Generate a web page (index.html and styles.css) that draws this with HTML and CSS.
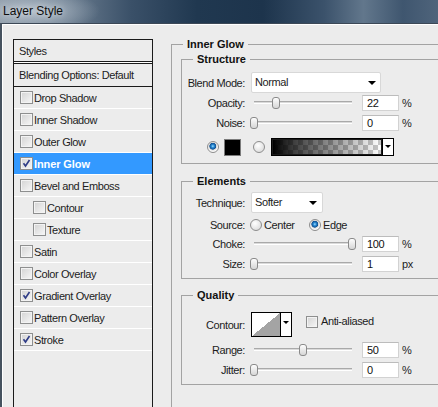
FILE: index.html
```html
<!DOCTYPE html>
<html lang="en">
<head>
<meta charset="UTF-8">
<title>Layer Style</title>
<link rel="stylesheet" href="styles.css">
</head>
<body>
<header class="titlebar">
<span class="title">Layer Style</span>
</header>

<div class="dialog">

<ul class="styles">
<li class="head">Styles</li>
<li class="head blending">Blending Options: Default</li>
<li><span class="cb"></span>Drop Shadow</li>
<li><span class="cb"></span>Inner Shadow</li>
<li><span class="cb"></span>Outer Glow</li>
<li class="selected"><span class="cb"><svg viewBox="0 0 11 11"><path d="M2.5 5.2l2 2.8 4-6" fill="none" stroke="#2f3c86" stroke-width="1.6"/></svg></span>Inner Glow</li>
<li><span class="cb"></span>Bevel and Emboss</li>
<li class="sub"><span class="cb"></span>Contour</li>
<li class="sub"><span class="cb"></span>Texture</li>
<li><span class="cb"></span>Satin</li>
<li><span class="cb"></span>Color Overlay</li>
<li><span class="cb"><svg viewBox="0 0 11 11"><path d="M2.5 5.2l2 2.8 4-6" fill="none" stroke="#2f3c86" stroke-width="1.6"/></svg></span>Gradient Overlay</li>
<li><span class="cb"></span>Pattern Overlay</li>
<li><span class="cb"><svg viewBox="0 0 11 11"><path d="M2.5 5.2l2 2.8 4-6" fill="none" stroke="#2f3c86" stroke-width="1.6"/></svg></span>Stroke</li>
</ul>

<section class="panel">
<fieldset class="group main">
<legend>Inner Glow</legend>

<!-- structure -->
<fieldset class="group structure">
<legend>Structure</legend>
<div class="row blend">
<span class="lbl">Blend Mode:</span>
<span class="select wide">Normal</span>
</div>
<div class="row opacity">
<span class="lbl">Opacity:</span>
<span class="slider"><span class="track"></span><span class="thumb" style="left:20.6px"></span></span>
<span class="num">22</span><span class="unit">%</span>
</div>
<div class="row noise">
<span class="lbl">Noise:</span>
<span class="slider"><span class="track"></span><span class="thumb" style="left:-1px"></span></span>
<span class="num">0</span><span class="unit">%</span>
</div>
<div class="row colors">
<span class="radio on"></span>
<span class="swatch"></span>
<span class="radio second"></span>
<span class="gradient"><span class="ramp"></span><span class="drop"></span></span>
</div>
</fieldset>

<!-- elements -->
<fieldset class="group elements">
<legend>Elements</legend>
<div class="row technique">
<span class="lbl">Technique:</span>
<span class="select short">Softer</span>
</div>
<div class="row source">
<span class="lbl tight">Source:</span>
<span class="choice"><span class="radio"></span>Center</span>
<span class="choice"><span class="radio on"></span>Edge</span>
</div>
<div class="row choke">
<span class="lbl">Choke:</span>
<span class="slider"><span class="track"></span><span class="thumb" style="left:97px"></span></span>
<span class="num">100</span><span class="unit">%</span>
</div>
<div class="row size">
<span class="lbl">Size:</span>
<span class="slider"><span class="track"></span><span class="thumb" style="left:-1px"></span></span>
<span class="num">1</span><span class="unit">px</span>
</div>
</fieldset>

<!-- quality -->
<fieldset class="group quality">
<legend>Quality</legend>
<div class="row contour">
<span class="lbl">Contour:</span>
<span class="curve"><span class="preview"></span><span class="drop"></span></span>
<span class="cb small"></span><span class="cb-text">Anti-aliased</span>
</div>
<div class="row range">
<span class="lbl">Range:</span>
<span class="slider"><span class="track"></span><span class="thumb" style="left:48px"></span></span>
<span class="num">50</span><span class="unit">%</span>
</div>
<div class="row jitter">
<span class="lbl">Jitter:</span>
<span class="slider"><span class="track"></span><span class="thumb" style="left:-1px"></span></span>
<span class="num">0</span><span class="unit">%</span>
</div>
</fieldset>

</fieldset>
</section>

</div>
</body>
</html>
```

FILE: styles.css
```css
  body{
	margin: 0;
	overflow: hidden;
	background-color: #ececec;
	color: #1c1c1c;
	font-family: "Liberation Sans", Arial, sans-serif;
	font-size: 11px;
	letter-spacing: -0.4px;
  }

  /* window caption */
  .titlebar{
	height: 23px;
	background:
		radial-gradient(ellipse 70px 22px at 30px 11px, rgba(190,200,210,.85), rgba(190,200,210,0)),
		linear-gradient(to right, #8593a1 0%, #6f8193 14%, #3a5068 30%, #203850 45%, #1d344c 60%, #3b526b 74%, #62778c 83%, #3f566f 92%, #4f647b 100%);
  }
  .title{
	display: inline-block;
	padding: 3px 0 0 3px;
	font-size: 12px;
	line-height: 16px;
	letter-spacing: 0;
	color: #0e0e0e;
	text-shadow: 0 0 6px rgba(255,255,255,.7);
  }

  .dialog{
	display: flex;
	align-items: flex-start;
	box-sizing: border-box;
	height: 384px;
	padding: 14px 0 0 11px;
	border-top: 1px solid #3c4856;
	border-left: 2px solid #46525f;
	box-shadow: inset 1px 1px 0 #fff;
  }

  /* styles list on the left */
  .styles{
	flex: none;
	box-sizing: border-box;
	width: 140px;
	height: 380px;
	margin: 1px 0 0;
	padding: 0;
	list-style: none;
	border: 1px solid #1b1b1b;
  }
  .styles li{
	display: flex;
	align-items: center;
	box-sizing: border-box;
	height: 22px;
	padding-left: 6px;
	border-bottom: 1px solid #fff;
  }
  .styles .head{
	padding-left: 5px;
	border-bottom-color: #1b1b1b;
  }
  .styles .blending{
	height: 24px;
	margin-top: 1px;
	border-top: 1px solid #1b1b1b;
	box-shadow: 0 -1px 0 #fff;
  }
  .styles .sub{
	padding-left: 19px;
  }
  .styles .selected{
	background-color: #3399ff;
	color: #fff;
	font-weight: bold;
	letter-spacing: -0.1px;
  }

  .cb{
	display: inline-flex;
	flex: none;
	box-sizing: border-box;
	width: 13px;
	height: 13px;
	margin-right: 1px;
	border: 1px solid #8e8f8f;
	background: linear-gradient(135deg, #d3d3d3, #f7f7f7);
	box-shadow: inset 0 0 0 1px #f3f3f3;
  }
  .cb svg{
	width: 11px;
	height: 11px;
  }
  .cb.small{
	width: 12px;
	height: 12px;
	margin: 4px 3px 0 14px;
	align-self: flex-start;
  }

  /* right side groups */
  .panel{
	flex: none;
	width: 330px;
	margin-left: 18px;
  }
  .group{
	min-width: 0;
	margin: 0;
	padding: 0;
	border: 1px solid #a3a3a3;
  }
  .group > legend{
	margin-left: 11px;
	padding: 0 4px;
	font-weight: bold;
	line-height: 12px;
	letter-spacing: 0;
	color: #111;
  }
  .main{
	height: 420px;
	padding: 3px 0 0 9px;
  }
  .main > legend{
	margin-left: 2px;
  }
  .structure{
	padding: 7px 0 7px;
  }
  .elements{
	margin-top: 11px;
	padding: 5px 0 6px;
  }
  .quality{
	margin-top: 10px;
	padding: 11px 0 6px;
  }

  .row{
	display: flex;
	align-items: center;
	height: 16px;
  }
  .lbl{
	flex: none;
	width: 63px;
	margin-right: 6px;
	text-align: right;
  }
  .lbl.tight{
	margin-right: 5px;
  }

  .blend{ height: 21px; margin-bottom: 2px; }
  .opacity{ margin-bottom: 4px; }
  .noise{ margin-bottom: 7px; }
  .colors{ height: 18px; padding-left: 25px; }

  .technique{ height: 21px; margin-bottom: 6px; }
  .source{ height: 12px; margin-bottom: 5px; }
  .choke{ margin-bottom: 4px; }

  .contour{ height: 25px; margin-bottom: 5px; }
  .range{ margin-bottom: 4px; }

  .select{
	position: relative;
	box-sizing: border-box;
	height: 21px;
	padding-left: 3px;
	border: 1px solid #d8d8d8;
	border-radius: 2px;
	background-color: #fff;
	line-height: 19px;
  }
  .select::after{
	content: "";
	position: absolute;
	right: 4px;
	top: 8px;
	border-left: 4px solid transparent;
	border-right: 4px solid transparent;
	border-top: 4px solid #000;
  }
  .select.wide{ width: 130px; }
  .select.short{ width: 72px; }
  .select.short::after{ right: 5px; }

  .slider{
	position: relative;
	flex: none;
	width: 106px;
	height: 16px;
  }
  .track{
	position: absolute;
	left: 3px;
	right: 5px;
	top: 6px;
	box-sizing: border-box;
	height: 3px;
	border-top: 1px solid #a9a9a9;
	border-bottom: 1px solid #fff;
	background-color: #dadada;
  }
  .thumb{
	position: absolute;
	top: 2px;
	box-sizing: border-box;
	width: 8px;
	height: 12px;
	border: 1px solid #8a8a8a;
	border-radius: 3px 3px 3px 3px;
	background: linear-gradient(#fdfdfd, #d6d6d6);
  }

  .num{
	flex: none;
	box-sizing: border-box;
	width: 37px;
	height: 16px;
	margin-left: 5px;
	padding-left: 4px;
	border: 1px solid #d2d2d2;
	border-top-color: #bcbcbc;
	background-color: #fff;
	line-height: 14px;
	color: #111;
  }
  .unit{
	margin-left: 3px;
  }

  .radio{
	display: inline-block;
	flex: none;
	box-sizing: border-box;
	width: 12px;
	height: 12px;
	border: 1px solid #8d8d8d;
	border-radius: 50%;
	background: radial-gradient(circle at 40% 35%, #fff, #d4d4d4);
  }
  .radio.on{
	background: radial-gradient(circle at 48% 42%, #a6e0ff 0, #2c8fd8 1.4px, #0e4f92 3.1px, #d9d9d9 3.7px, #fbfbfb 5px);
  }
  .radio.second{
	margin-left: 12px;
  }

  .swatch{
	flex: none;
	box-sizing: border-box;
	width: 17px;
	height: 17px;
	margin-left: 5px;
	border: 1px solid #7b7b7b;
	background-color: #000;
  }

  .gradient{
	display: flex;
	flex: none;
	box-sizing: border-box;
	width: 123px;
	height: 18px;
	margin-left: 6px;
	border: 1px solid #000;
  }
  .gradient .ramp{
	flex: 1;
	border: 1px solid #1a1a1a;
	background:
		linear-gradient(to right, #000 0%, rgba(0,0,0,.75) 20%, rgba(0,0,0,0) 100%),
		repeating-conic-gradient(#c8c8c8 0 25%, #fff 0 50%) 0 0 / 10px 10px;
  }
  .drop{
	position: relative;
	flex: none;
	width: 10px;
	border-left: 1px solid #000;
	background-color: #fff;
  }
  .drop::after{
	content: "";
	position: absolute;
	left: 2px;
	top: 6px;
	border-left: 3px solid transparent;
	border-right: 3px solid transparent;
	border-top: 3px solid #000;
  }

  .choice{
	display: inline-flex;
	align-items: center;
	width: 59px;
	gap: 2px;
  }

  .curve{
	display: flex;
	flex: none;
	box-sizing: border-box;
	width: 41px;
	height: 25px;
	border: 1px solid #000;
  }
  .curve .preview{
	flex: 1;
	background: linear-gradient(to bottom right, #fff 50%, #a4a4a4 50%);
  }
  .curve .drop::after{
	top: 8px;
  }
  .cb-text{
	align-self: flex-start;
	margin-top: 3px;
  }
```
